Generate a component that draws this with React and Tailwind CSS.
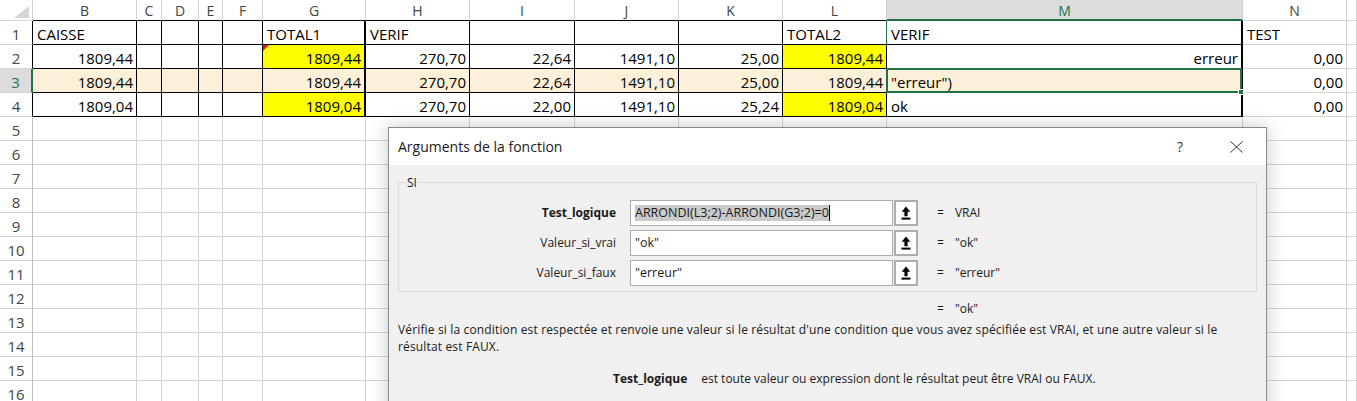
import React from 'react';

const COLS = ['B', 'C', 'D', 'E', 'F', 'G', 'H', 'I', 'J', 'K', 'L', 'M', 'N', 'O'];
const TABLE = ['B', 'C', 'D', 'E', 'F', 'G', 'H', 'I', 'J', 'K', 'L', 'M'];
const ROWS = Array.from({ length: 16 }, (_, i) => i + 1);

const DATA = {
  1: { B: ['CAISSE', 'l'], G: ['TOTAL1', 'l'], H: ['VERIF', 'l'], L: ['TOTAL2', 'l'], M: ['VERIF', 'l'], N: ['TEST', 'l'] },
  2: { B: ['1809,44', 'r'], G: ['1809,44', 'r'], H: ['270,70', 'r'], I: ['22,64', 'r'], J: ['1491,10', 'r'], K: ['25,00', 'r'], L: ['1809,44', 'r'], M: ['erreur', 'r'], N: ['0,00', 'r'] },
  3: { B: ['1809,44', 'r'], G: ['1809,44', 'r'], H: ['270,70', 'r'], I: ['22,64', 'r'], J: ['1491,10', 'r'], K: ['25,00', 'r'], L: ['1809,44', 'r'], M: ['"erreur")', 'l'], N: ['0,00', 'r'] },
  4: { B: ['1809,04', 'r'], G: ['1809,04', 'r'], H: ['270,70', 'r'], I: ['22,00', 'r'], J: ['1491,10', 'r'], K: ['25,24', 'r'], L: ['1809,04', 'r'], M: ['ok', 'l'], N: ['0,00', 'r'] },
};
const YELLOW = { G2: 1, G4: 1, L2: 1, L4: 1 };

function headerLetterClass(col) {
  let c = 'flex items-center justify-center pt-[1px] border-r border-b border-r-[#d4d4d4] text-[14px] ';
  if (col === 'M') c += 'border-b-2 border-b-[#217346] bg-[#dcdcdc] text-[#217346]';
  else if (col === 'N' || col === 'O') c += 'border-b-[#d4d4d4] bg-white text-[#444]';
  else c += 'border-b-black bg-white text-[#444]';
  return c;
}

function rowHeaderClass(row) {
  let c = 'flex items-end justify-center border-b border-b-[#d4d4d4] text-[15px] leading-[20px] ';
  if (row === 3) c += 'border-r-2 border-r-[#217346] bg-[#dcdcdc] text-[#217346]';
  else if (row <= 4) c += 'border-r border-r-black bg-white text-[#444]';
  else c += 'border-r border-r-[#bdbdbd] bg-white text-[#444]';
  return c;
}

function cellClass(row, col, align) {
  const inTable = row <= 4 && TABLE.includes(col);
  let c = 'relative flex items-end whitespace-nowrap border-b text-[15px] leading-[20px] text-black ';
  c += inTable && (col === 'G' || col === 'M') ? 'border-r-2 ' : 'border-r ';
  if (row === 1 && col === 'L') c += 'border-r-[#217346] ';
  else if (inTable) c += 'border-r-black ';
  else c += 'border-r-[#d4d4d4] ';
  c += inTable ? 'border-b-black ' : 'border-b-[#d4d4d4] ';
  if (YELLOW[col + row]) c += 'bg-[#ffff00] ';
  else if (row === 3 && inTable) c += 'bg-[#fdf0d8] ';
  else c += 'bg-white ';
  c += align === 'r' ? 'justify-end pr-[3px]' : 'justify-start pl-[4px]';
  return c;
}

function UploadIcon() {
  return (
    <svg width="10" height="14" viewBox="0 0 10 14">
      <path d="M5 0.5 L9.3 5.8 H6.6 V10.2 H3.4 V5.8 H0.7 Z" fill="#000" />
      <rect x="0.5" y="11.6" width="9" height="2" fill="#000" />
    </svg>
  );
}

function ArgRow({ label, bold, value, result, selected }) {
  return (
    <div className="flex h-[26px] items-center">
      <div className={'w-[217px] text-right ' + (bold ? 'font-bold' : '')}>{label}</div>
      <div className="ml-[14px] flex h-[26px] w-[263px] items-center border border-[#ababab] bg-white pl-[4px] text-[12.5px] whitespace-nowrap">
        {selected ? (
          <>
            <span className="bg-[#cacaca] leading-[16px]">{value}</span>
            <span className="h-[16px] w-[1px] bg-black" />
          </>
        ) : (
          <span>{value}</span>
        )}
      </div>
      <div className="ml-[1px] flex h-[26px] w-[24px] items-center justify-center border-2 border-[#adadad] bg-white">
        <UploadIcon />
      </div>
      <span className="ml-[19px]">=</span>
      <span className="ml-[11px]">{result}</span>
    </div>
  );
}

function Dialog() {
  return (
    <div className="absolute left-[388px] top-[127px] z-20 h-[300px] w-[879px] border border-[#8a8a8a] bg-[#f0f0f0] font-['Open_Sans',sans-serif] text-[12px] text-[#1a1a1a] shadow-[0_0_18px_rgba(0,0,0,0.22)]">
      <div className="flex h-[37px] items-center bg-white pl-[9px]">
        <span className="text-[14px]">Arguments de la fonction</span>
        <span className="ml-auto text-[14px] text-[#333]">?</span>
        <svg className="ml-[47px] mr-[23px]" width="13" height="12" viewBox="0 0 13 12">
          <path d="M0.5 0.5 L12.5 11.5 M12.5 0.5 L0.5 11.5" stroke="#333" strokeWidth="1" fill="none" />
        </svg>
      </div>
      <div className="px-[9px]">
        <div className="relative mt-[17px] h-[110px] border border-[#dadada]">
          <span className="absolute -top-[7px] left-[7px] bg-[#f0f0f0] px-[1px] leading-[14px]">SI</span>
          <div className="flex flex-col gap-[4px] pt-[17px]">
            <ArgRow label="Test_logique" bold value="ARRONDI(L3;2)-ARRONDI(G3;2)=0" result="VRAI" selected />
            <ArgRow label="Valeur_si_vrai" value={'"ok"'} result={'"ok"'} />
            <ArgRow label="Valeur_si_faux" value={'"erreur"'} result={'"erreur"'} />
          </div>
        </div>
        <div className="mt-[7px] flex h-[20px] items-center">
          <span className="ml-[539px]">=</span>
          <span className="ml-[11px]">"ok"</span>
        </div>
        <div className="mt-[2px] whitespace-nowrap leading-[17px] tracking-[0.15px]">
          Vérifie si la condition est respectée et renvoie une valeur si le résultat d'une condition que vous avez spécifiée est VRAI, et une autre valeur si le
          <br />
          résultat est FAUX.
        </div>
        <div className="mt-[15px] flex whitespace-nowrap leading-[17px]">
          <span className="ml-[215px] font-bold">Test_logique</span>
          <span className="ml-[14px]">est toute valeur ou expression dont le résultat peut être VRAI ou FAUX.</span>
        </div>
      </div>
    </div>
  );
}

export default function App() {
  return (
    <div className="relative h-[401px] w-[1357px] overflow-hidden bg-white font-['Open_Sans',sans-serif]">
      <div className="grid grid-cols-[33px_104px_25px_37px_24px_40px_103px_104px_105px_104px_104px_104px_356px_104px_1fr] grid-rows-[21px_repeat(16,24px)]">
        <div className="flex items-end justify-end border-b border-r border-b-[#d4d4d4] border-r-[#d4d4d4] bg-white pb-[2px] pr-[3px]">
          <svg width="15" height="12" viewBox="0 0 15 12">
            <path d="M15 0 L15 12 L0 12 Z" fill="#d6d6d6" />
          </svg>
        </div>
        {COLS.map((col) => (
          <div key={'h' + col} className={headerLetterClass(col)}>
            {col === 'O' ? '' : col}
          </div>
        ))}
        {ROWS.map((row) => (
          <React.Fragment key={'r' + row}>
            <div className={rowHeaderClass(row)}>{row}</div>
            {COLS.map((col) => {
              const d = (DATA[row] || {})[col];
              const align = d ? d[1] : 'l';
              return (
                <div key={col + row} className={cellClass(row, col, align)}>
                  {d ? d[0] : ''}
                  {col === 'G' && row === 2 && (
                    <span className="absolute left-0 top-0 h-0 w-0 border-r-[6px] border-t-[6px] border-r-transparent border-t-[#e02020]" />
                  )}
                  {col === 'M' && row === 3 && (
                    <span className="pointer-events-none absolute -bottom-[1px] -left-[1px] -right-[1px] -top-[1px] z-10 border-2 border-[#217346]">
                      <span className="absolute -bottom-[4px] -right-[4px] h-[6px] w-[6px] border border-white bg-[#217346]" />
                    </span>
                  )}
                </div>
              );
            })}
          </React.Fragment>
        ))}
      </div>
      <Dialog />
    </div>
  );
}
